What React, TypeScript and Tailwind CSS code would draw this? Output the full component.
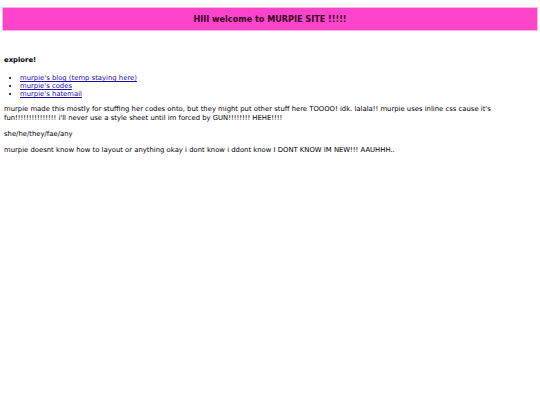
export default function App() {
  return (
    <div className="min-h-screen bg-white px-[4px] pt-[8px] text-[6.85px] leading-[9px] text-black" style={{ fontFamily: '"DejaVu Sans", Verdana, sans-serif' }}>
      <header className="mx-[-1px] flex h-[22px] items-center justify-center bg-[#ff44cc] shadow-[0_0_0_1px_#ffb3ea]">
        <h1 className="text-[8.1px] font-bold text-[#330022]">HIII welcome to MURPIE SITE !!!!!</h1>
      </header>

      <h2 className="mt-[26px] text-[6.85px] font-bold">explore!</h2>
      <ul className="mt-[9px] list-disc pl-[16px] leading-[8px]">
        <li><a className="text-[#1a0dab] underline" href="#">murpie's blog (temp staying here)</a></li>
        <li><a className="text-[#1a0dab] underline" href="#">murpie's codes</a></li>
        <li><a className="text-[#1a0dab] underline" href="#">murpie's hatemail</a></li>
      </ul>

      <p className="mt-[7px]">
        murpie made this mostly for stuffing her codes onto, but they might put other stuff here TOOOO! idk. lalala!! murpie uses inline css cause it's fun!!!!!!!!!!!!!!! i'll never use a style sheet until im forced by GUN!!!!!!!! HEHE!!!!
      </p>
      <p className="mt-[7px]">she/he/they/fae/any</p>
      <p className="mt-[7px]">murpie doesnt know how to layout or anything okay i dont know i ddont know I DONT KNOW IM NEW!!! AAUHHH..</p>
    </div>
  );
}
